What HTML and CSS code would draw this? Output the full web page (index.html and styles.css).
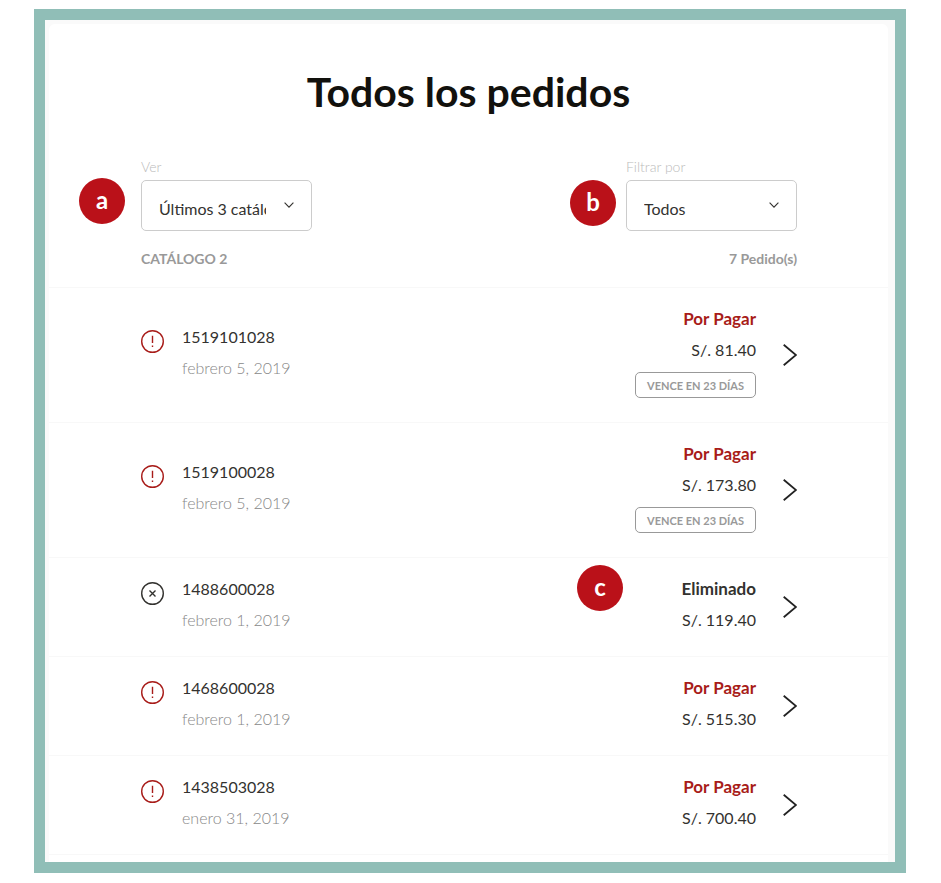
FILE: index.html
```html
<!DOCTYPE html>
<html lang="es">
<head>
  <meta charset="UTF-8">
  <meta name="viewport" content="width=device-width, initial-scale=1.0">
  <title>Todos los pedidos</title>
  <link rel="stylesheet" href="styles.css">
</head>
<body>
  <!-- Shared icons -->
  <svg class="sprite" aria-hidden="true">
    <symbol id="icon-alert" viewBox="0 0 23 23">
      <circle cx="11.5" cy="11.5" r="10.8" fill="none" stroke="currentColor" stroke-width="1.4"/>
      <path d="M11.5 5.8v7.2M11.5 15.4v1.6" fill="none" stroke="currentColor" stroke-width="1.4"/>
    </symbol>
    <symbol id="icon-removed" viewBox="0 0 23 23">
      <circle cx="11.5" cy="11.5" r="10.8" fill="none" stroke="currentColor" stroke-width="1.4"/>
      <path d="M8.5 8.5l6 6M14.5 8.5l-6 6" fill="none" stroke="currentColor" stroke-width="1.4"/>
    </symbol>
    <symbol id="icon-next" viewBox="0 0 14 22">
      <path d="M.7 .8L13 11L.7 21.2" fill="none" stroke="currentColor" stroke-width="1.8"/>
    </symbol>
    <symbol id="icon-down" viewBox="0 0 10 6">
      <path d="M.6 .6L5 5.2L9.4 .6" fill="none" stroke="currentColor" stroke-width="1.1"/>
    </symbol>
  </svg>

  <main class="frame">
    <div class="panel">
      <h1>Todos los pedidos</h1>

      <form class="filters">
        <div class="field">
          <label for="ver">Ver</label>
          <div class="select-box">
            <span class="marker marker-a">a</span>
            <select id="ver" name="ver">
              <option>Últimos 3 catálogos</option>
            </select>
            <svg class="chevron"><use href="#icon-down"/></svg>
          </div>
        </div>
        <div class="field">
          <label for="filtrar">Filtrar por</label>
          <div class="select-box">
            <span class="marker marker-b">b</span>
            <select id="filtrar" name="filtrar">
              <option>Todos</option>
            </select>
            <svg class="chevron"><use href="#icon-down"/></svg>
          </div>
        </div>
      </form>

      <div class="catalog">
        <h2>CATÁLOGO 2</h2>
        <span>7 Pedido(s)</span>
      </div>

      <ul class="orders">
        <li class="order">
          <div class="order-info">
            <svg class="status-icon unpaid"><use href="#icon-alert"/></svg>
            <div>
              <div class="number">1519101028</div>
              <div class="date">febrero 5, 2019</div>
            </div>
          </div>
          <div class="summary">
            <div class="status unpaid">Por Pagar</div>
            <div class="amount">S/. 81.40</div>
            <div class="due">VENCE EN 23 DÍAS</div>
          </div>
          <a class="next" href="#" aria-label="Ver pedido 1519101028"><svg><use href="#icon-next"/></svg></a>
        </li>

        <li class="order">
          <div class="order-info">
            <svg class="status-icon unpaid"><use href="#icon-alert"/></svg>
            <div>
              <div class="number">1519100028</div>
              <div class="date">febrero 5, 2019</div>
            </div>
          </div>
          <div class="summary">
            <div class="status unpaid">Por Pagar</div>
            <div class="amount">S/. 173.80</div>
            <div class="due">VENCE EN 23 DÍAS</div>
          </div>
          <a class="next" href="#" aria-label="Ver pedido 1519100028"><svg><use href="#icon-next"/></svg></a>
        </li>

        <li class="order">
          <span class="marker marker-c">c</span>
          <div class="order-info">
            <svg class="status-icon"><use href="#icon-removed"/></svg>
            <div>
              <div class="number">1488600028</div>
              <div class="date">febrero 1, 2019</div>
            </div>
          </div>
          <div class="summary">
            <div class="status">Eliminado</div>
            <div class="amount">S/. 119.40</div>
          </div>
          <a class="next" href="#" aria-label="Ver pedido 1488600028"><svg><use href="#icon-next"/></svg></a>
        </li>

        <li class="order">
          <div class="order-info">
            <svg class="status-icon unpaid"><use href="#icon-alert"/></svg>
            <div>
              <div class="number">1468600028</div>
              <div class="date">febrero 1, 2019</div>
            </div>
          </div>
          <div class="summary">
            <div class="status unpaid">Por Pagar</div>
            <div class="amount">S/. 515.30</div>
          </div>
          <a class="next" href="#" aria-label="Ver pedido 1468600028"><svg><use href="#icon-next"/></svg></a>
        </li>

        <li class="order">
          <div class="order-info">
            <svg class="status-icon unpaid"><use href="#icon-alert"/></svg>
            <div>
              <div class="number">1438503028</div>
              <div class="date">enero 31, 2019</div>
            </div>
          </div>
          <div class="summary">
            <div class="status unpaid">Por Pagar</div>
            <div class="amount">S/. 700.40</div>
          </div>
          <a class="next" href="#" aria-label="Ver pedido 1438503028"><svg><use href="#icon-next"/></svg></a>
        </li>
      </ul>
    </div>
  </main>
</body>
</html>
```

FILE: styles.css
```css
:root {
  --frame-color: #90beb7;
  --marker-color: #ba1119;
  --unpaid-color: #a81c19;
  --text-color: #33322f;
  --muted-color: #999;
  --line-color: #f8f8f8;
}

* {
  box-sizing: border-box;
}

body {
  font-family: Futura, Lato, sans-serif;
  font-size: 16px;
  background: white;
  color: var(--text-color);
  margin: 0;
  padding: 9px 35px 10px 34px;
}

.sprite {
  display: none;
}

.frame {
  border: 11px solid var(--frame-color);
  background: #fafafa;
  padding: 4px 7px 0 4px;
}

.panel {
  background: white;
  border-radius: 6px 6px 0 0;
  padding: 40px 0 7px;
}

h1 {
  margin: 0 0 40px;
  font-size: 41px;
  line-height: 56px;
  font-weight: 700;
  text-align: center;
  color: #12110d;
}

.filters {
  display: flex;
  justify-content: space-between;
  padding: 0 91px 0 92px;
}

.field {
  width: 171px;
}

.field label {
  display: block;
  height: 20px;
  font-size: 14px;
  line-height: 14px;
  font-weight: 300;
  color: #bbb;
}

.select-box {
  position: relative;
}

select {
  display: block;
  width: 100%;
  height: 51px;
  padding: 5px 45px 0 17px;
  border: 1px solid #ccc;
  border-radius: 5px;
  background: white;
  color: var(--text-color);
  font-family: inherit;
  font-size: 16px;
  appearance: none;
}

.chevron {
  position: absolute;
  top: 22px;
  right: 18px;
  width: 10px;
  height: 6px;
  pointer-events: none;
}

.marker {
  position: absolute;
  width: 46px;
  height: 46px;
  border-radius: 50%;
  background: var(--marker-color);
  color: white;
  font-size: 24px;
  line-height: 44px;
  font-weight: 700;
  text-align: center;
}

.marker-a {
  top: -2px;
  left: -62px;
}

.marker-b {
  top: 0;
  left: -56px;
}

.marker-c {
  top: 7px;
  right: 265px;
}

.catalog {
  display: flex;
  justify-content: space-between;
  padding: 18px 91px 18px 92px;
  border-bottom: 1px solid var(--line-color);
  font-size: 14px;
  line-height: 20px;
  font-weight: 700;
  color: var(--muted-color);
}

.catalog h2 {
  margin: 0;
  font-size: 14px;
}

.orders {
  list-style: none;
  margin: 0;
  padding: 0;
}

.order {
  position: relative;
  display: flex;
  align-items: center;
  padding: 15px 91px 21px 92px;
  border-bottom: 1px solid var(--line-color);
  line-height: 31px;
}

.order-info {
  flex: 1;
  display: flex;
  gap: 18px;
}

.status-icon {
  width: 23px;
  height: 23px;
  margin-top: 9px;
}

.date {
  font-weight: 300;
  color: #888;
}

.summary {
  text-align: right;
}

.status {
  font-size: 17px;
  font-weight: 700;
}

.unpaid {
  color: var(--unpaid-color);
}

.due {
  margin: 7px 0 3px;
  padding: 1px 11px 0;
  border: 1px solid var(--muted-color);
  border-radius: 5px;
  font-size: 11px;
  line-height: 23px;
  font-weight: 700;
  color: var(--muted-color);
}

.next {
  margin: 6px 0 0 27px;
  color: #222;
}

.next svg {
  display: block;
  width: 14px;
  height: 22px;
}
```
